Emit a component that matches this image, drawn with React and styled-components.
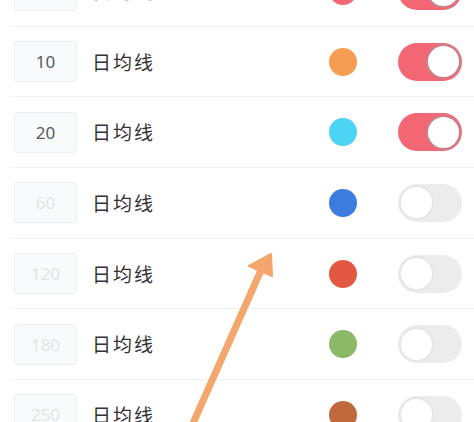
import React from 'react'
import styled, { createGlobalStyle } from 'styled-components'

const GlobalStyle = createGlobalStyle`
  html, body {
    margin: 0;
    padding: 0;
    background: #fff;
    overflow: hidden;
  }
  body {
    font-family: "Noto Sans", "Noto Sans CJK SC", sans-serif;
  }
`

const lines = [
  { days: 5, color: '#f36775', on: true },
  { days: 10, color: '#f59d52', on: true },
  { days: 20, color: '#4dd4f4', on: true },
  { days: 60, color: '#3b7ddf', on: false },
  { days: 120, color: '#e35843', on: false },
  { days: 180, color: '#8cb867', on: false },
  { days: 250, color: '#c0693d', on: false },
]

const App = () => {
  return (
    <Page>
      <GlobalStyle />
      <List>
        {lines.map((l) => (
          <Row key={l.days}>
            <DaysBox $on={l.on}>{l.days}</DaysBox>
            <Label>日均线</Label>
            <Dot $color={l.color} />
            <Switch $on={l.on}>
              <Knob $on={l.on} />
            </Switch>
          </Row>
        ))}
      </List>
      <Arrow width="474" height="422" viewBox="0 0 474 422">
        <line x1="190" y1="430" x2="262" y2="268" stroke="#f5a66d" strokeWidth="7" strokeLinecap="round" />
        <polygon points="271,254 249,266 272,276" fill="#f5a66d" stroke="#f5a66d" strokeWidth="2" strokeLinejoin="round" />
      </Arrow>
    </Page>
  )
}

export default App

const Page = styled.div`
  position: relative;
  width: 474px;
  height: 422px;
  overflow: hidden;
`

const List = styled.div`
  margin-top: -44px;
  margin-left: 10px;
`

const Row = styled.div`
  height: 69.7px;
  display: flex;
  align-items: center;
  padding: 0 12px 0 4px;
  border-bottom: 1px solid #f1f1f1;
`

const DaysBox = styled.div`
  width: 63px;
  height: 41px;
  box-sizing: border-box;
  border: 1px solid #eceef0;
  border-radius: 4px;
  background: #f9fafb;
  display: flex;
  align-items: center;
  justify-content: center;
  font-family: "Noto Sans", sans-serif;
  font-size: 17px;
  color: ${(p) => (p.$on ? '#555a5f' : '#e1e5e8')};
`

const Label = styled.span`
  margin-left: 15px;
  font-family: "Noto Sans CJK SC", sans-serif;
  font-size: 19px;
  line-height: 22px;
  letter-spacing: 2px;
  color: #333;
  flex: 1;
`

const Dot = styled.span`
  width: 28px;
  height: 28px;
  border-radius: 50%;
  background: ${(p) => p.$color};
  margin-right: 41px;
`

const Switch = styled.span`
  width: 64px;
  height: 38px;
  border-radius: 19px;
  background: ${(p) => (p.$on ? '#f36775' : '#ececec')};
  display: flex;
  align-items: center;
  justify-content: ${(p) => (p.$on ? 'flex-end' : 'flex-start')};
  padding: 0 1px;
  box-sizing: border-box;
`

const Knob = styled.span`
  width: 35px;
  height: 35px;
  box-sizing: border-box;
  border-radius: 50%;
  background: #fff;
  border: 2px solid ${(p) => (p.$on ? '#c9808c' : '#e6e6e6')};
`

const Arrow = styled.svg`
  position: absolute;
  left: 0;
  top: 0;
  pointer-events: none;
`
